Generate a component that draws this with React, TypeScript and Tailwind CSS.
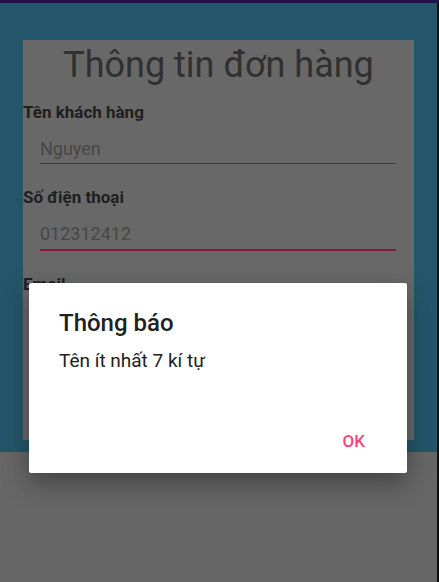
export default function App() {
  return (
    <div
      className="relative w-[439px] h-[582px] overflow-hidden bg-[#666666]"
      style={{ fontFamily: "Roboto, 'Noto Sans', sans-serif" }}
    >
      {/* status bar */}
      <div className="h-[3px] bg-[#20124a]" />

      <div className="flex h-[579px]">
        <div className="flex flex-col w-[437px]">
          {/* teal area */}
          <div className="h-[449px] bg-[#23566a] pt-[37px] pl-[23px] pr-[23px]">
            <div className="h-[400px] bg-[#686868] overflow-hidden flex flex-col">
              <h1 className="pt-[4px] text-center text-[36px] leading-[42px] text-[#303030] font-normal">
                Thông tin đơn hàng
              </h1>

              <div className="mt-[16px] text-[17px] leading-[20px] font-bold text-[#1f1f1f]">
                Tên khách hàng
              </div>
              <div className="mt-[16px] ml-[17px] mr-[18px] pb-[4px] border-b border-[#3a3a3a]">
                <div className="text-[18px] leading-[21px] text-[#474747]">Nguyen</div>
              </div>

              <div className="mt-[23px] text-[17px] leading-[20px] font-bold text-[#1f1f1f]">
                Số điện thoại
              </div>
              <div className="mt-[16px] ml-[17px] mr-[18px] pb-[5px] border-b-2 border-[#7d1a3c]">
                <div className="text-[18px] leading-[21px] text-[#474747]">012312412</div>
              </div>

              <div className="mt-[23px] text-[17px] leading-[20px] font-bold text-[#1f1f1f]">
                Email
              </div>
            </div>
          </div>
          {/* dimmed bottom */}
          <div className="flex-1 bg-[#666666]" />
        </div>
        <div className="w-[2px] bg-[#111111]" />
      </div>

      {/* alert dialog */}
      <div className="absolute left-[29px] top-[283px] w-[378px] h-[190px] bg-white rounded-[2px] shadow-[0_10px_26px_rgba(0,0,0,0.35)] flex flex-col pt-[26px] pl-[30px] pr-[42px] pb-[22px]">
        <div className="text-[24px] leading-[28px] font-medium text-[#212121]">Thông báo</div>
        <div className="mt-[13px] text-[19px] leading-[22px] text-[#212121]">Tên ít nhất 7 kí tự</div>
        <div className="mt-auto flex justify-end">
          <button className="text-[17px] leading-[20px] font-medium text-[#ff4081]">OK</button>
        </div>
      </div>
    </div>
  );
}
